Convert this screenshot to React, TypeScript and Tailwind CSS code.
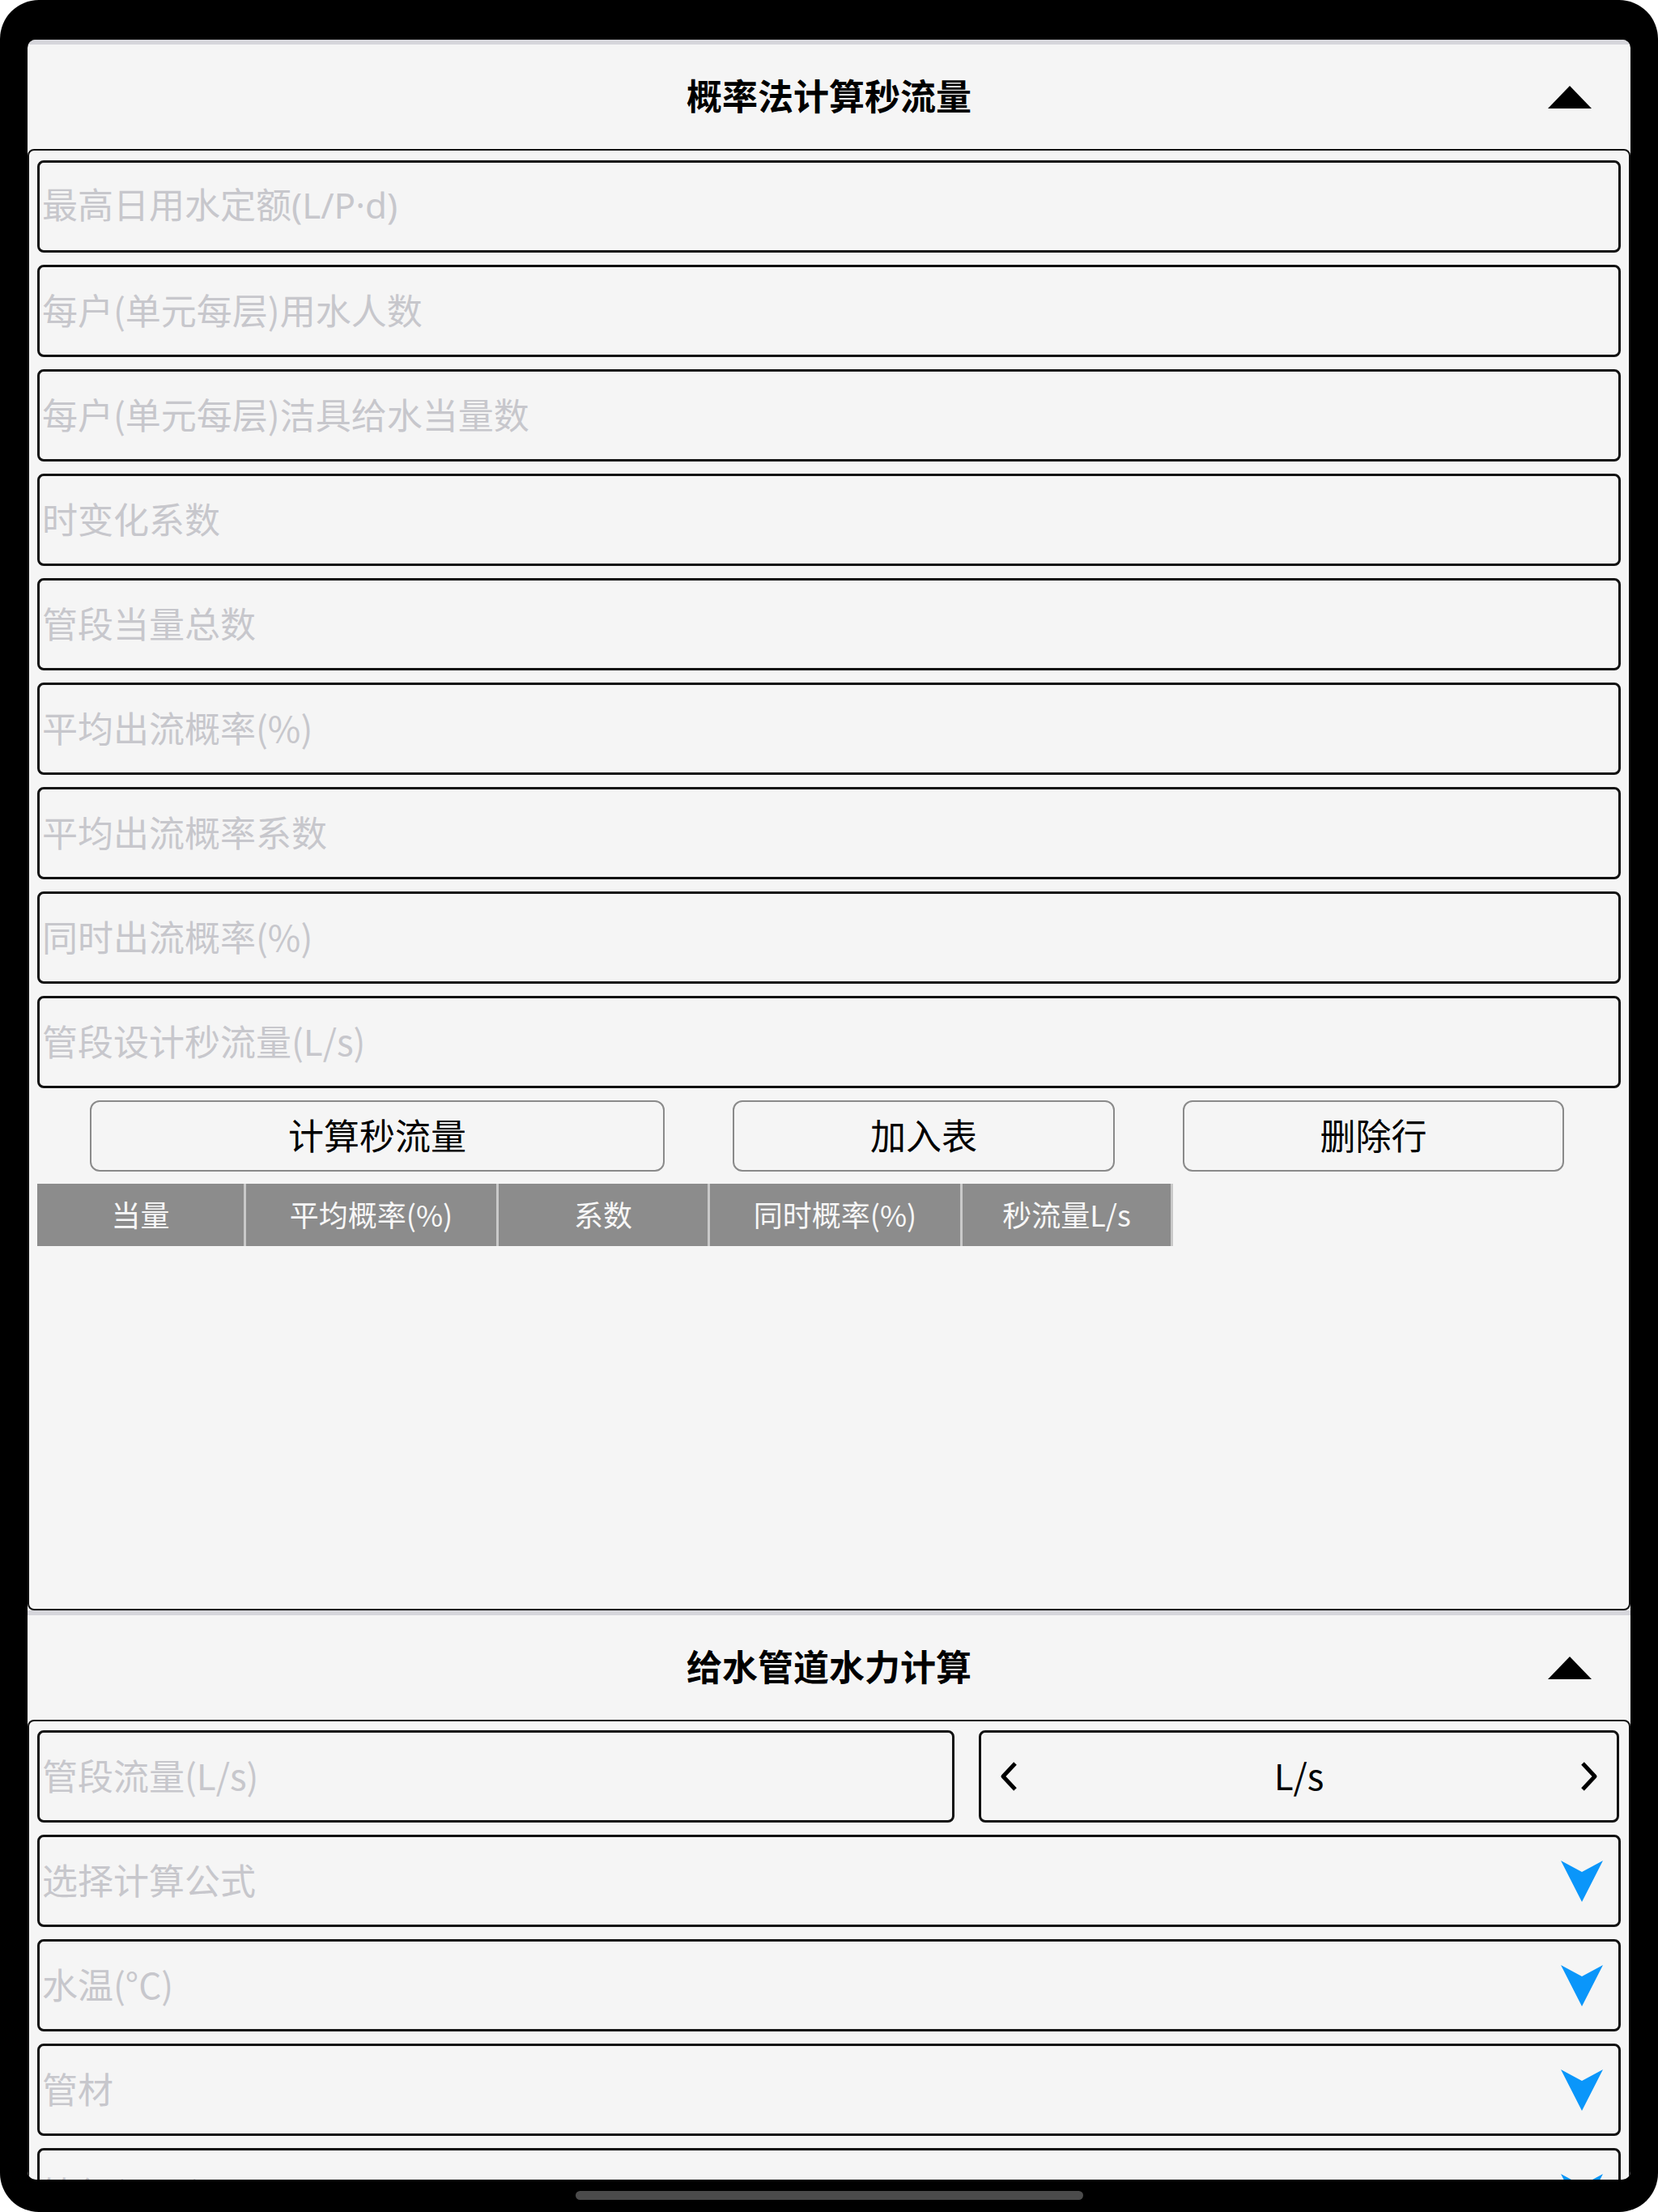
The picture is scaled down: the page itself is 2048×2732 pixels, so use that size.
import React from "react";

const topFields = [
  "最高日用水定额(L/P·d)",
  "每户(单元每层)用水人数",
  "每户(单元每层)洁具给水当量数",
  "时变化系数",
  "管段当量总数",
  "平均出流概率(%)",
  "平均出流概率系数",
  "同时出流概率(%)",
  "管段设计秒流量(L/s)",
];

const columns = [
  { label: "当量", w: "w-[258px]" },
  { label: "平均概率(%)", w: "w-[312px]" },
  { label: "系数", w: "w-[261px]" },
  { label: "同时概率(%)", w: "w-[312px]" },
  { label: "秒流量L/s", w: "w-[260px]" },
];

const selects = ["选择计算公式", "水温(°C)", "管材", "管径(mm)"];

function UpTriangle() {
  return (
    <svg width="54" height="28" viewBox="0 0 54 28" className="mr-[48px] justify-self-end">
      <polygon points="27,0 54,28 0,28" fill="#000" />
    </svg>
  );
}

function SectionHeader({ title }: { title: string }) {
  return (
    <div className="shrink-0 border-t-[6px] border-[#d6d6db]">
      <div className="grid h-[129px] grid-cols-[1fr_auto_1fr] items-center">
        <div />
        <h2 className="mb-[5px] text-[44px] font-bold leading-none text-black">{title}</h2>
        <UpTriangle />
      </div>
    </div>
  );
}

function Field({ placeholder }: { placeholder: string }) {
  // 中点在 CJK 字体里是全角，这一栏换成 Noto Sans 优先
  const latinFirst = placeholder.includes("·");
  return (
    <input
      placeholder={placeholder}
      className={`h-[114px] w-full shrink-0 rounded-[8px] border-[3px] border-[#111] bg-transparent px-[3px] pb-[5px] text-[44px] text-black outline-none placeholder:text-[#c7c7cc] ${
        latinFirst ? "font-['Noto_Sans','Noto_Sans_CJK_SC',sans-serif]" : ""
      }`}
    />
  );
}

function DownArrow() {
  return (
    <svg width="52" height="52" viewBox="0 0 52 52">
      <polygon points="0,1 26,15 52,1 26,52" fill="#0a96fa" />
    </svg>
  );
}

function Chevron({ dir }: { dir: "left" | "right" }) {
  return (
    <svg width="24" height="38" viewBox="0 0 24 38">
      <polyline
        points={dir === "left" ? "20,3 5,19 20,35" : "4,3 19,19 4,35"}
        fill="none"
        stroke="#000"
        strokeWidth="5"
        strokeLinejoin="round"
      />
    </svg>
  );
}

export default function App() {
  return (
    <div className="h-[2732px] w-[2048px] bg-white font-['Noto_Sans_CJK_SC','Noto_Sans',sans-serif]">
      <div className="relative h-full w-full rounded-[48px] bg-black px-[34px] pb-[40px] pt-[49px]">
        <div className="flex h-full flex-col overflow-hidden rounded-[10px] bg-[#f5f5f5]">
          <SectionHeader title="概率法计算秒流量" />

          {/* 概率法 */}
          <section className="flex h-[1805px] shrink-0 flex-col gap-[15px] rounded-[8px] border-2 border-[#111] px-[10px] pt-[12px]">
            {topFields.map((f) => (
              <Field key={f} placeholder={f} />
            ))}

            <div className="flex shrink-0 gap-[84px] pl-[65px]">
              <button className="h-[88px] w-[710px] rounded-[12px] border-2 border-[#8a8a8a] pb-[4px] text-[44px] text-black">
                计算秒流量
              </button>
              <button className="h-[88px] w-[472px] rounded-[12px] border-2 border-[#8a8a8a] pb-[4px] text-[44px] text-black">
                加入表
              </button>
              <button className="h-[88px] w-[471px] rounded-[12px] border-2 border-[#8a8a8a] pb-[4px] text-[44px] text-black">
                删除行
              </button>
            </div>

            <div className="flex h-[77px] shrink-0">
              {columns.map((c) => (
                <div
                  key={c.label}
                  className={`${c.w} flex items-center justify-center border-r-[3px] border-[#c9c9c9] bg-[#8c8c8c] pb-[3px] text-[36px] text-[#f7f7f7]`}
                >
                  {c.label}
                </div>
              ))}
            </div>
          </section>

          <SectionHeader title="给水管道水力计算" />

          {/* 水力计算 */}
          <section className="flex shrink-0 flex-col gap-[15px] rounded-[8px] border-2 border-[#111] px-[10px] pb-[20px] pt-[11px]">
            <div className="flex shrink-0 gap-[30px]">
              <div className="w-[1133px] shrink-0">
                <Field placeholder="管段流量(L/s)" />
              </div>
              <div className="mr-[2px] flex h-[114px] flex-1 items-center justify-between rounded-[8px] border-[3px] border-[#111] px-[22px]">
                <Chevron dir="left" />
                <span className="pb-[5px] text-[44px] text-black">L/s</span>
                <Chevron dir="right" />
              </div>
            </div>

            {selects.map((s) => (
              <div
                key={s}
                className="flex h-[114px] shrink-0 items-center justify-between rounded-[8px] border-[3px] border-[#111] pl-[3px] pr-[19px]"
              >
                <span className="pb-[5px] text-[44px] text-[#c7c7cc]">{s}</span>
                <DownArrow />
              </div>
            ))}
          </section>
        </div>

        <div className="absolute bottom-[15px] left-[711px] h-[11px] w-[627px] rounded-full bg-[#4b4b4b]" />
      </div>
    </div>
  );
}
